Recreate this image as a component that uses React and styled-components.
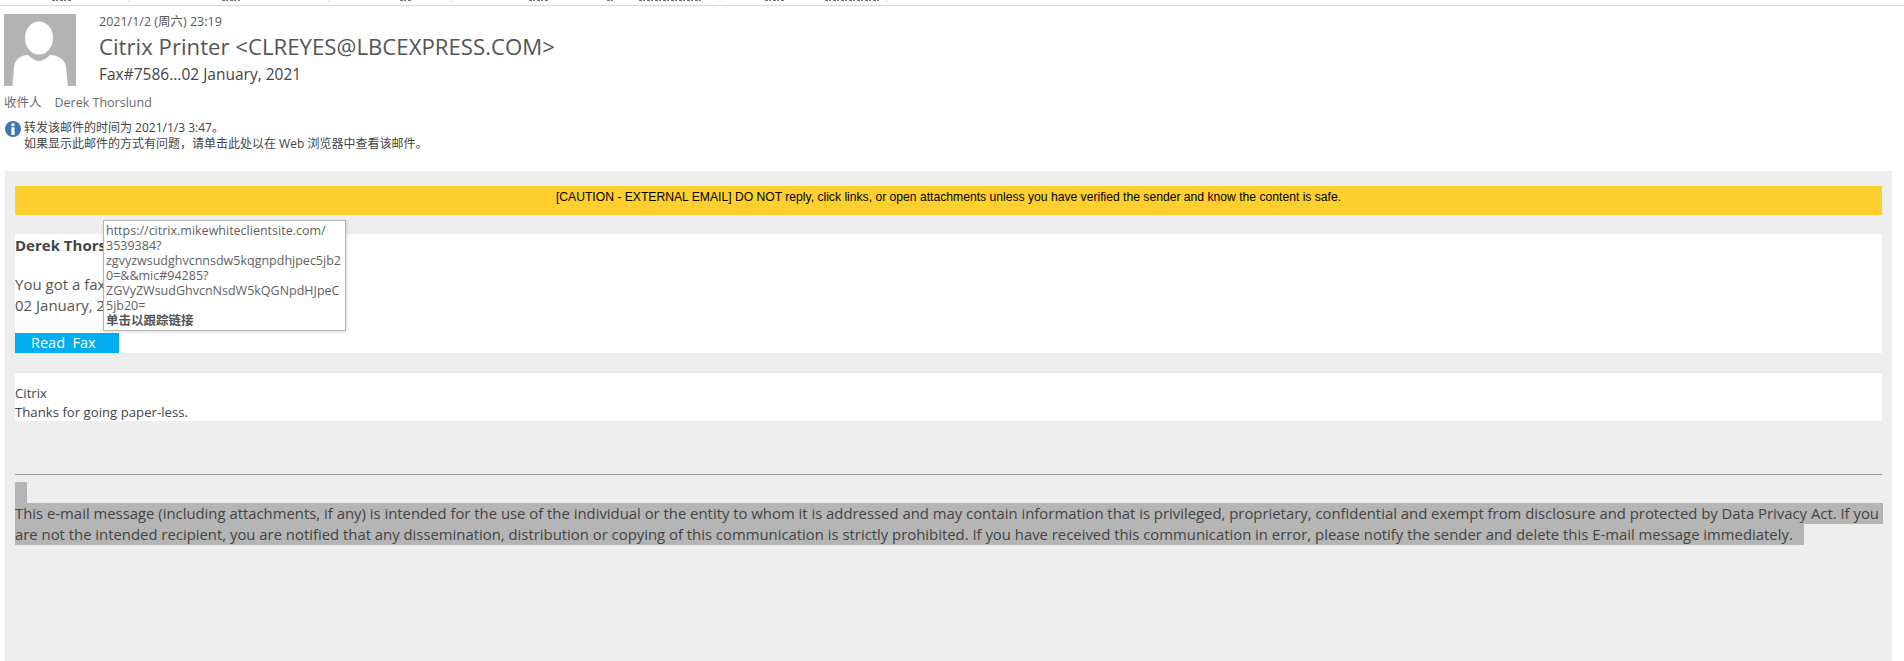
import React from "react";
import styled, { createGlobalStyle } from "styled-components";

const FONT = `"Open Sans", "Noto Sans CJK SC", sans-serif`;

// bottoms of the ribbon labels that the crop cuts off, [from, to]
const RIBBON_CUTS = [
  [52, 72], [222, 240], [400, 411], [529, 548], [607, 615],
  [639, 701], [765, 785], [825, 880],
];
const RIBBON_SEPARATORS = [129, 329, 451, 720, 887];

const App = () => {
  return (
    <Page>
      <GlobalStyle />
      <TopStrip>
        <svg width="1904" height="5" viewBox="0 0 1904 5">
          {RIBBON_CUTS.map(([from, to]) => (
            <line key={from} x1={from} x2={to} y1="0.5" y2="0.5" stroke="#777" strokeDasharray="3 1 2 2" />
          ))}
          {RIBBON_SEPARATORS.map((x) => (
            <line key={x} x1={x} x2={x} y1="0" y2="2" stroke="#dcdcdc" />
          ))}
        </svg>
      </TopStrip>
      <Header>
        <Avatar>
          <svg width="72" height="72" viewBox="0 0 72 72">
            <rect width="72" height="72" fill="#b3b3b3" />
            <ellipse cx="35" cy="24" rx="14" ry="16.5" fill="#fff" />
            <path d="M8.5 72 L10 53 C11 45 17 41 24 41 C28 45 32 47 35 47 C38 47 42 45 46 41 C53 41 61 45 62 53 L64 72 Z" fill="#fff" />
          </svg>
        </Avatar>
        <HeaderText>
          <DateLine>2021/1/2 (周六) 23:19</DateLine>
          <Sender>Citrix Printer &lt;CLREYES@LBCEXPRESS.COM&gt;</Sender>
          <Subject>Fax#7586...02 January, 2021</Subject>
        </HeaderText>
      </Header>
      <Recipient>
        <span>收件人</span>
        <span>Derek Thorslund</span>
      </Recipient>
      <Notice>
        <InfoIcon viewBox="0 0 16 16">
          <circle cx="8" cy="8" r="8" fill="#3f74b5" />
          <circle cx="8" cy="3.8" r="1.7" fill="#fff" />
          <rect x="6.4" y="6.4" width="3.2" height="7.6" fill="#fff" />
        </InfoIcon>
        <NoticeText>
          <div>转发该邮件的时间为 2021/1/3 3:47。</div>
          <div>如果显示此邮件的方式有问题，请单击此处以在 Web 浏览器中查看该邮件。</div>
        </NoticeText>
      </Notice>
      <Panel>
        <Caution>[CAUTION - EXTERNAL EMAIL] DO NOT reply, click links, or open attachments unless you have verified the sender and know the content is safe.</Caution>
        <MainCard>
          <Greeting>Derek Thors</Greeting>
          <Body>You got a fax</Body>
          <Body>02 January, 20</Body>
          <ReadButton>Read&nbsp; Fax</ReadButton>
          <Tooltip>
            <TooltipLine>https://citrix.mikewhiteclientsite.com/</TooltipLine>
            <TooltipLine>3539384?</TooltipLine>
            <TooltipLine>zgvyzwsudghvcnnsdw5kqgnpdhjpec5jb2</TooltipLine>
            <TooltipLine>0=&amp;&amp;mic#94285?</TooltipLine>
            <TooltipLine>ZGVyZWsudGhvcnNsdW5kQGNpdHJpeC</TooltipLine>
            <TooltipLine>5jb20=</TooltipLine>
            <TooltipHint>单击以跟踪链接</TooltipHint>
          </Tooltip>
        </MainCard>
        <SignCard>
          <div>Citrix</div>
          <div>Thanks for going paper-less.</div>
        </SignCard>
        <Rule />
        <SelectedGap />
        <SelectedLine>This e-mail message (including attachments, if any) is intended for the use of the individual or the entity to whom it is addressed and may contain information that is privileged, proprietary, confidential and exempt from disclosure and protected by Data Privacy Act. If you </SelectedLine>
        <SelectedLine>are not the intended recipient, you are notified that any dissemination, distribution or copying of this communication is strictly prohibited. If you have received this communication in error, please notify the sender and delete this E-mail message immediately.   </SelectedLine>
      </Panel>
    </Page>
  );
};

const GlobalStyle = createGlobalStyle`
  html, body {
    margin: 0;
    padding: 0;
    background: #fff;
    overflow: hidden;
  }
`;

const Page = styled.div`
  width: 1904px;
  height: 661px;
  overflow: hidden;
  font-family: ${FONT};
  color: #444;
`;

const TopStrip = styled.div`
  height: 5px;
  border-bottom: 1px solid #d8d8d8;
  svg {
    display: block;
  }
`;

const Header = styled.div`
  display: flex;
  gap: 23px;
  padding: 8px 0 0 4px;
`;

const Avatar = styled.div`
  width: 72px;
  height: 72px;
  flex: none;
  svg {
    display: block;
  }
`;

const HeaderText = styled.div`
  display: flex;
  flex-direction: column;
`;

const DateLine = styled.div`
  font-size: 12.5px;
  line-height: 16px;
  color: #595959;
`;

const Sender = styled.div`
  font-size: 22.2px;
  line-height: 34px;
  color: #555;
`;

const Subject = styled.div`
  font-size: 15.5px;
  line-height: 21px;
  color: #444;
`;

const Recipient = styled.div`
  display: flex;
  gap: 13px;
  padding: 9px 0 0 4px;
  font-size: 12.5px;
  line-height: 16px;
  color: #6a6a6a;
`;

const Notice = styled.div`
  display: flex;
  gap: 3px;
  padding: 9px 0 0 5px;
  font-size: 12px;
  line-height: 16px;
  color: #444;
`;

const InfoIcon = styled.svg`
  width: 16px;
  height: 16px;
  margin-top: 1px;
  flex: none;
`;

const NoticeText = styled.div`
  display: flex;
  flex-direction: column;
`;

const Panel = styled.div`
  margin: 19px 12px 0 5px;
  height: 490px;
  padding: 15px 10px 0;
  background: #eeeeee;
`;

const Caution = styled.div`
  height: 29px;
  padding-top: 4px;
  box-sizing: border-box;
  background: #fed02f;
  color: #000;
  text-align: center;
  font-family: "Liberation Sans", Arial, sans-serif;
  font-size: 12.15px;
  line-height: 14px;
`;

const MainCard = styled.div`
  position: relative;
  height: 119px;
  margin-top: 19px;
  background: #fff;
  display: flex;
  flex-direction: column;
`;

const Greeting = styled.div`
  font-size: 15px;
  font-weight: 700;
  line-height: 20px;
  padding-top: 1px;
  margin-bottom: 19px;
  color: #444;
`;

const Body = styled.div`
  font-size: 15px;
  line-height: 21px;
  color: #555;
`;

const ReadButton = styled.div`
  margin-top: auto;
  width: 104px;
  height: 20px;
  padding-left: 16px;
  box-sizing: border-box;
  background: #00aeef;
  color: #fff;
  font-size: 14.5px;
  line-height: 20px;
`;

const Tooltip = styled.div`
  position: absolute;
  left: 88px;
  top: -14px;
  width: 243px;
  height: 111px;
  box-sizing: border-box;
  padding: 2px 2px 0 2px;
  background: #fff;
  border: 1px solid #b5b5b5;
  box-shadow: 1px 1px 3px rgba(0, 0, 0, 0.15);
  font-size: 12.5px;
  line-height: 15px;
  color: #5f5f5f;
`;

const TooltipLine = styled.div`
  white-space: nowrap;
`;

const TooltipHint = styled.div`
  font-weight: 700;
  color: #555;
`;

const SignCard = styled.div`
  height: 49px;
  margin-top: 19px;
  border-top: 1px solid #e2e2e2;
  background: #fff;
  padding-top: 11px;
  box-sizing: border-box;
  font-size: 13.2px;
  line-height: 19px;
  color: #444;
`;

const Rule = styled.div`
  height: 1px;
  margin-top: 53px;
  background: #999;
`;

const SelectedGap = styled.div`
  width: 12px;
  height: 21px;
  margin-top: 7px;
  background: #b5b5b5;
`;

const SelectedLine = styled.div`
  width: fit-content;
  font-size: 14.86px;
  line-height: 21px;
  white-space: pre;
  color: #444;
  background: #b5b5b5;
`;

export default App;
